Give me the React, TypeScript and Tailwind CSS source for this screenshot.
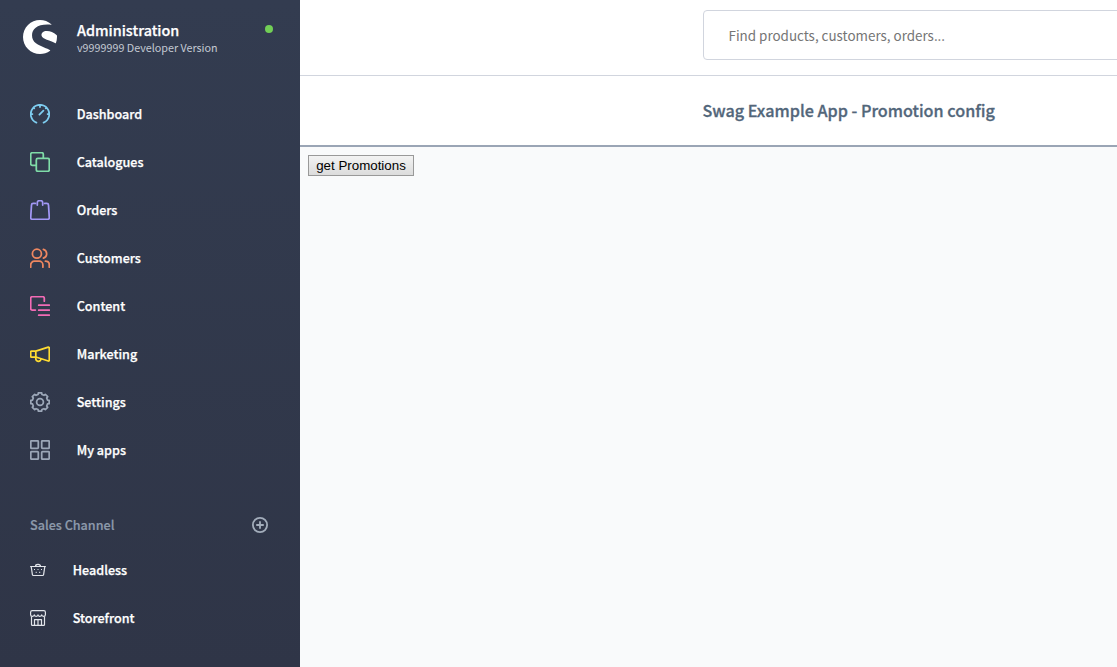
import type { ReactNode } from 'react';
import { SiShopware } from 'react-icons/si';

const gearPath = (() => {
  const teeth = 8;
  const pts: string[] = [];
  for (let i = 0; i < teeth; i++) {
    const steps: [number, number][] = [
      [-0.32, 7.8],
      [-0.23, 9.3],
      [0.23, 9.3],
      [0.32, 7.8],
    ];
    for (const [o, r] of steps) {
      const a = ((i + o) / teeth) * Math.PI * 2 - Math.PI / 2;
      pts.push(`${(10 + r * Math.cos(a)).toFixed(2)} ${(10 + r * Math.sin(a)).toFixed(2)}`);
    }
  }
  return `M${pts.join('L')}Z`;
})();

const menu: { label: string; color: string; icon: ReactNode }[] = [
  {
    label: 'Dashboard',
    color: 'text-[#7ecdf0]',
    icon: (
      <path d="M6.4 18.6A9.25 9.25 0 1 1 13.6 18.6M10 1v2M.8 10h1.6M17.6 10h1.6M9.4 10.6l4-4M3.5 3.7l.7.7M16.5 3.7l-.7.7" />
    ),
  },
  {
    label: 'Catalogues',
    color: 'text-[#7fdca8]',
    icon: (
      <>
        <path d="M6 13.3H2.3A1.6 1.6 0 0 1 .7 11.7V2.3A1.6 1.6 0 0 1 2.3.7h9.4a1.6 1.6 0 0 1 1.6 1.6V6" />
        <rect x="6.3" y="6.3" width="13" height="13" rx="1.6" />
      </>
    ),
  },
  {
    label: 'Orders',
    color: 'text-[#a297f5]',
    icon: (
      <path d="M5.3 3.4H3.2A1.7 1.7 0 0 0 1.5 5L.7 17.6a1.6 1.6 0 0 0 1.6 1.7h15.4a1.6 1.6 0 0 0 1.6-1.7L18.5 5a1.7 1.7 0 0 0-1.7-1.6h-2.1M7.3 5V2.7a2 2 0 0 1 2-2h1.4a2 2 0 0 1 2 2V5" />
    ),
  },
  {
    label: 'Customers',
    color: 'text-[#ee8760]',
    icon: (
      <>
        <circle cx="6.9" cy="5.7" r="4.5" />
        <path d="M.7 19.2v-2.3a3.7 3.7 0 0 1 3.7-3.7h4.8a3.7 3.7 0 0 1 3.7 3.7v2.3M13.4 1.3a4.6 4.6 0 0 1 0 8.8M15.4 13.2c2.4 0 3.9 1.6 3.9 3.7v2.3" />
      </>
    ),
  },
  {
    label: 'Content',
    color: 'text-[#f26bb5]',
    icon: (
      <path d="M5.4 14H2.2A1.5 1.5 0 0 1 .7 12.5V2.2A1.5 1.5 0 0 1 2.2.7h10.6a1.5 1.5 0 0 1 1.5 1.5v3M8.7 9.2h10.6M8.7 14.2h10.6M8.7 19.2h10.6" />
    ),
  },
  {
    label: 'Marketing',
    color: 'text-[#ffdc32]',
    icon: (
      <>
        <path d="M5.8 7.2H1.4a.7.7 0 0 0-.7.7v4.4c0 .4.3.7.7.7h4.4zM5.8 7.2l12.5-4a.8.8 0 0 1 1 .8v12.2a.8.8 0 0 1-1 .8L5.8 13" />
        <path d="M5.8 13v1.5a2.6 2.6 0 0 0 5.2.5" />
      </>
    ),
  },
  {
    label: 'Settings',
    color: 'text-[#9ca7b8]',
    icon: (
      <>
        <path d={gearPath} />
        <circle cx="10" cy="10" r="3.4" />
      </>
    ),
  },
  {
    label: 'My apps',
    color: 'text-[#9ca7b8]',
    icon: (
      <>
        <rect x=".8" y=".8" width="7.5" height="7.5" rx=".8" />
        <rect x="11.7" y=".8" width="7.5" height="7.5" rx=".8" />
        <rect x=".8" y="11.7" width="7.5" height="7.5" rx=".8" />
        <rect x="11.7" y="11.7" width="7.5" height="7.5" rx=".8" />
      </>
    ),
  },
];

function BasketIcon() {
  return (
    <svg viewBox="0 0 16 16" className="size-4 fill-none stroke-current stroke-[1.2]">
      <path d="M.6 4.5h14.8M1.2 4.7l1.2 7.9c.1.5.4.9 1 .9h9.2c.6 0 .9-.4 1-.9l1.2-7.9M5.5 4.4c0-1.6.8-2.1 2.5-2.1s2.5.5 2.5 2.1" strokeLinecap="round" />
      <path d="M4 7.5h1M7.5 7.5h1M11 7.5h1M5.7 10.3h1M9.2 10.3h1" />
    </svg>
  );
}

function StoreIcon() {
  return (
    <svg viewBox="0 0 16 16" className="size-4 fill-none stroke-current stroke-[1.2]" strokeLinejoin="round">
      <path d="M1.5 6.5v7.9c0 .6.3 1 .9 1h11.2c.6 0 .9-.4.9-1V6.5" />
      <path d="M.6 4.7V2.2C.6 1.2 1.2.6 2.2.6h11.6c1 0 1.6.6 1.6 1.6v2.5c0 1-.7 1.6-1.8 1.6s-1.9-.6-1.9-1.5c0 .9-.8 1.5-1.85 1.5S8 5.7 8 4.8c0 .9-.8 1.5-1.85 1.5S4.3 5.7 4.3 4.8c0 .9-.8 1.5-1.9 1.5S.6 5.7.6 4.7z" />
      <path d="M4.5 15.4v-5.8h7v5.8M8 9.6v5.8" />
    </svg>
  );
}

export default function App() {
  return (
    <div className="flex h-[667px] w-full overflow-hidden bg-[#f9fafb] font-['Noto_Sans_CJK_SC','Noto_Sans',sans-serif]">
      <aside className="flex w-[300px] shrink-0 flex-col bg-linear-to-b from-[#333c50] to-[#2f3547] text-white">
        <header className="flex h-[90px] shrink-0 pt-5 pl-[23px]">
          <SiShopware className="size-[34px] shrink-0" />
          <div className="ml-5 flex-1">
            <div className="h-5 text-[14.4px] leading-5 font-medium [-webkit-text-stroke:0.25px]">Administration</div>
            <div className="h-4 text-[10.75px] leading-4 text-[#c3c9d3]">v9999999 Developer Version</div>
          </div>
          <span className="mt-[5px] mr-[27px] size-2 rounded-full bg-[#72cf56]" />
        </header>
        <nav className="shrink-0">
          {menu.map((m) => (
            <a key={m.label} className="flex h-12 items-center pl-[30px]">
              <svg
                viewBox="0 0 20 20"
                className={`size-5 fill-none stroke-current ${m.color}`}
                strokeWidth="1.75"
                strokeLinecap="round"
                strokeLinejoin="round"
              >
                {m.icon}
              </svg>
              <span className="ml-[26.7px] text-[12.6px] leading-5 font-medium [-webkit-text-stroke:0.25px]">{m.label}</span>
            </a>
          ))}
        </nav>
        <div className="mt-[31px] flex h-10 shrink-0 items-center justify-between pr-8 pl-[30px] text-[#8d9aab]">
          <span className="text-[12.6px] leading-5 font-medium [-webkit-text-stroke:0.2px]">Sales Channel</span>
          <svg viewBox="0 0 16 16" className="size-4 fill-none stroke-[#a3adbb] stroke-[1.8]" strokeLinecap="round">
            <circle cx="8" cy="8" r="7.1" />
            <path d="M8 4.9v6.2M4.9 8h6.2" />
          </svg>
        </div>
        <a className="mt-px flex h-12 shrink-0 items-center pl-[30px] text-[#e2e5ea]">
          <BasketIcon />
          <span className="ml-[26.7px] text-[12.6px] leading-5 font-medium text-white [-webkit-text-stroke:0.25px]">Headless</span>
        </a>
        <a className="flex h-12 shrink-0 items-center pl-[30px] text-[#e2e5ea]">
          <StoreIcon />
          <span className="ml-[26.7px] text-[12.6px] leading-5 font-medium text-white [-webkit-text-stroke:0.25px]">Storefront</span>
        </a>
      </aside>
      <main className="flex min-w-0 flex-1 flex-col">
        <div className="h-[76px] shrink-0 overflow-hidden border-b border-[#d1d5de] bg-white pt-[10px] pl-[403px]">
          <div className="flex h-[50px] w-[480px] items-center rounded border border-[#d1d5de] pl-[24.5px]">
            <span className="text-[13.42px] leading-6 whitespace-nowrap text-[#757575]">Find products, customers, orders...</span>
          </div>
        </div>
        <div className="flex h-[71px] shrink-0 items-center border-b-2 border-[#9aa5b5] bg-white pb-[2px] pl-[402.5px]">
          <h1 className="text-[16.17px] leading-6 font-medium whitespace-nowrap text-[#52667a] [-webkit-text-stroke:0.3px]">
            Swag Example App - Promotion config
          </h1>
        </div>
        <div className="p-2">
          <button className="block h-[21px] w-[106px] border border-[#999] bg-linear-to-b from-[#f3f3f3] to-[#dcdcdc] text-center font-['Liberation_Sans',sans-serif] text-[13.333px] leading-[19px] whitespace-nowrap text-black">
            get Promotions
          </button>
        </div>
      </main>
    </div>
  );
}
